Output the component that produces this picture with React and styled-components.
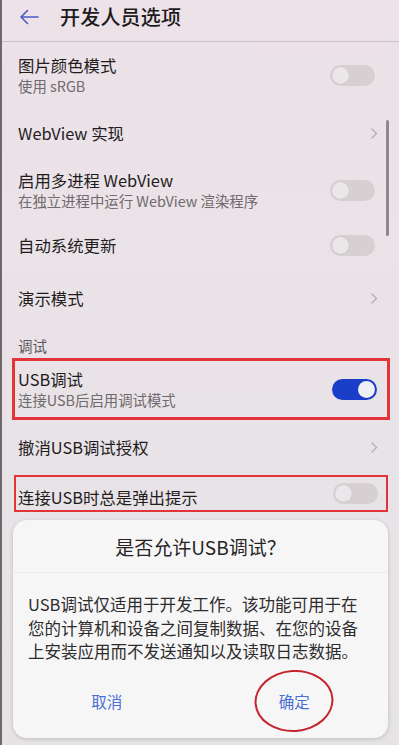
import React from 'react';
import styled, { createGlobalStyle } from 'styled-components';

const Global = createGlobalStyle`
  html, body {
    margin: 0;
    padding: 0;
    background: #8a8688;
  }
  body {
    font-family: "Noto Sans CJK SC", "Noto Sans", sans-serif;
  }
`;

const Page = styled.div`
  position: relative;
  width: 399px;
  height: 745px;
  overflow: hidden;
  display: flex;
  flex-direction: column;
  background: linear-gradient(180deg, #ece2e8 0%, #e9e3e7 45%, #e6e3e5 100%);
  border-left: 2px solid #6e686b;
  box-sizing: border-box;
`;

const Header = styled.div`
  height: 42px;
  box-sizing: border-box;
  display: flex;
  align-items: center;
  gap: 21px;
  padding: 0 0 8px 17px;
  border-bottom: 1px solid #cbc2c7;
`;

const Title = styled.div`
  font-size: 20px;
  font-weight: 500;
  color: #1d1b1c;
  letter-spacing: 0.2px;
`;

const Row = styled.div`
  height: ${p => p.$h}px;
  box-sizing: border-box;
  display: flex;
  align-items: center;
  justify-content: space-between;
  padding: 0 ${p => p.$pr ?? 24}px 0 ${p => p.$pl ?? 16}px;
`;

const Texts = styled.div`
  display: flex;
  flex-direction: column;
`;

const Label = styled.div`
  font-size: 16.4px;
  line-height: 22px;
  color: #1f1d1e;
  padding-top: ${p => p.$shift || 0}px;
`;

const Sub = styled.div`
  font-size: 14.4px;
  line-height: 20px;
  color: #6f6a6d;
`;

const Section = styled.div`
  height: 30px;
  box-sizing: border-box;
  padding: 8px 0 0 16px;
  font-size: 14.5px;
  line-height: 20px;
  color: #5d585b;
`;

const Highlight = styled.div`
  margin: ${p => p.$mt || 0}px 0 0 ${p => p.$ml}px;
  width: ${p => p.$w}px;
  box-sizing: border-box;
  border: ${p => p.$bw}px solid #e3343a;
`;

const Track = styled.div`
  width: 45px;
  height: 21px;
  border-radius: 11px;
  box-sizing: border-box;
  display: flex;
  align-items: center;
  justify-content: ${p => (p.$on ? 'flex-end' : 'flex-start')};
  padding: 0 2px;
  background: ${p => (p.$on ? '#1b3ec9' : '#d6d0d3')};
`;

const Thumb = styled.div`
  width: 17px;
  height: 17px;
  border-radius: 50%;
  background: ${p => (p.$on ? '#eef0f6' : '#ebe6e9')};
  box-shadow: 0 0 1px rgba(0, 0, 0, 0.15);
`;

const Scrollbar = styled.div`
  position: absolute;
  right: 10px;
  top: 120px;
  width: 3px;
  height: 116px;
  border-radius: 2px;
  background: #8e898c;
`;

const Dialog = styled.div`
  margin: 8px 0 0 11px;
  width: 375px;
  height: 218px;
  border-radius: 14px;
  background: #f7f6f7;
  box-shadow: 0 1px 4px rgba(0, 0, 0, 0.18);
  display: flex;
  flex-direction: column;
  overflow: hidden;
`;

const DialogTitle = styled.div`
  height: 53px;
  box-sizing: border-box;
  display: flex;
  align-items: center;
  justify-content: center;
  font-size: 19px;
  color: #262425;
  border-bottom: 1px solid #ecebec;
`;

const Body = styled.div`
  padding: 20px 0 0 15px;
  font-size: 16.5px;
  line-height: 23.5px;
  color: #2e2c2d;
  white-space: nowrap;
`;

const Buttons = styled.div`
  margin-top: 9px;
  height: 56px;
  display: flex;
`;

const Button = styled.div`
  position: relative;
  flex: 1;
  display: flex;
  align-items: center;
  justify-content: center;
  font-size: 15.5px;
  color: #4a6fd4;
`;

const Ring = styled.div`
  position: absolute;
  left: 50%;
  top: 50%;
  width: 79px;
  height: 62px;
  box-sizing: border-box;
  transform: translate(-50%, -50%) rotate(-4deg);
  border: 2.5px solid #c5252d;
  border-radius: 50%;
`;

function Toggle({ on }) {
  return (
    <Track $on={on}>
      <Thumb $on={on} />
    </Track>
  );
}

function Chevron() {
  return (
    <svg width="8" height="13" viewBox="0 0 8 13">
      <polyline points="1.5,1.5 6.5,6.5 1.5,11.5" fill="none" stroke="#b7b1b4" strokeWidth="1.4" />
    </svg>
  );
}

function BackArrow() {
  return (
    <svg width="20" height="16" viewBox="0 0 20 16">
      <path d="M19 8H2M8.5 1.5L2 8l6.5 6.5" fill="none" stroke="#4d5bc4" strokeWidth="1.6" strokeLinecap="round" strokeLinejoin="round" />
    </svg>
  );
}

export default function App() {
  return (
    <>
      <Global />
      <Page>
        <Header>
          <BackArrow />
          <Title>开发人员选项</Title>
        </Header>

        <Row $h={66}>
          <Texts>
            <Label>图片颜色模式</Label>
            <Sub>使用 sRGB</Sub>
          </Texts>
          <Toggle />
        </Row>
        <Row $h={50} $pr={21}>
          <Label>WebView 实现</Label>
          <Chevron />
        </Row>
        <Row $h={64}>
          <Texts>
            <Label>启用多进程 WebView</Label>
            <Sub>在独立进程中运行 WebView 渲染程序</Sub>
          </Texts>
          <Toggle />
        </Row>
        <Row $h={46}>
          <Label>自动系统更新</Label>
          <Toggle />
        </Row>
        <Row $h={60} $pr={21}>
          <Label>演示模式</Label>
          <Chevron />
        </Row>

        <Section>调试</Section>

        <Highlight $ml={10} $w={378} $bw={3}>
          <Row $h={56} $pl={3} $pr={10}>
            <Texts>
              <Label>USB调试</Label>
              <Sub>连接USB后启用调试模式</Sub>
            </Texts>
            <Toggle on />
          </Row>
        </Highlight>

        <Row $h={54} $pr={21}>
          <Label>撤消USB调试授权</Label>
          <Chevron />
        </Row>

        <Highlight $ml={12} $w={374} $bw={2} $mt={1}>
          <Row $h={33} $pl={2} $pr={8}>
            <Label $shift={6}>连接USB时总是弹出提示</Label>
            <Toggle />
          </Row>
        </Highlight>

        <Dialog>
          <DialogTitle>是否允许USB调试？</DialogTitle>
          <Body>
            USB调试仅适用于开发工作。该功能可用于在
            <br />
            您的计算机和设备之间复制数据、在您的设备
            <br />
            上安装应用而不发送通知以及读取日志数据。
          </Body>
          <Buttons>
            <Button>取消</Button>
            <Button>
              确定
              <Ring />
            </Button>
          </Buttons>
        </Dialog>

        <Scrollbar />
      </Page>
    </>
  );
}
